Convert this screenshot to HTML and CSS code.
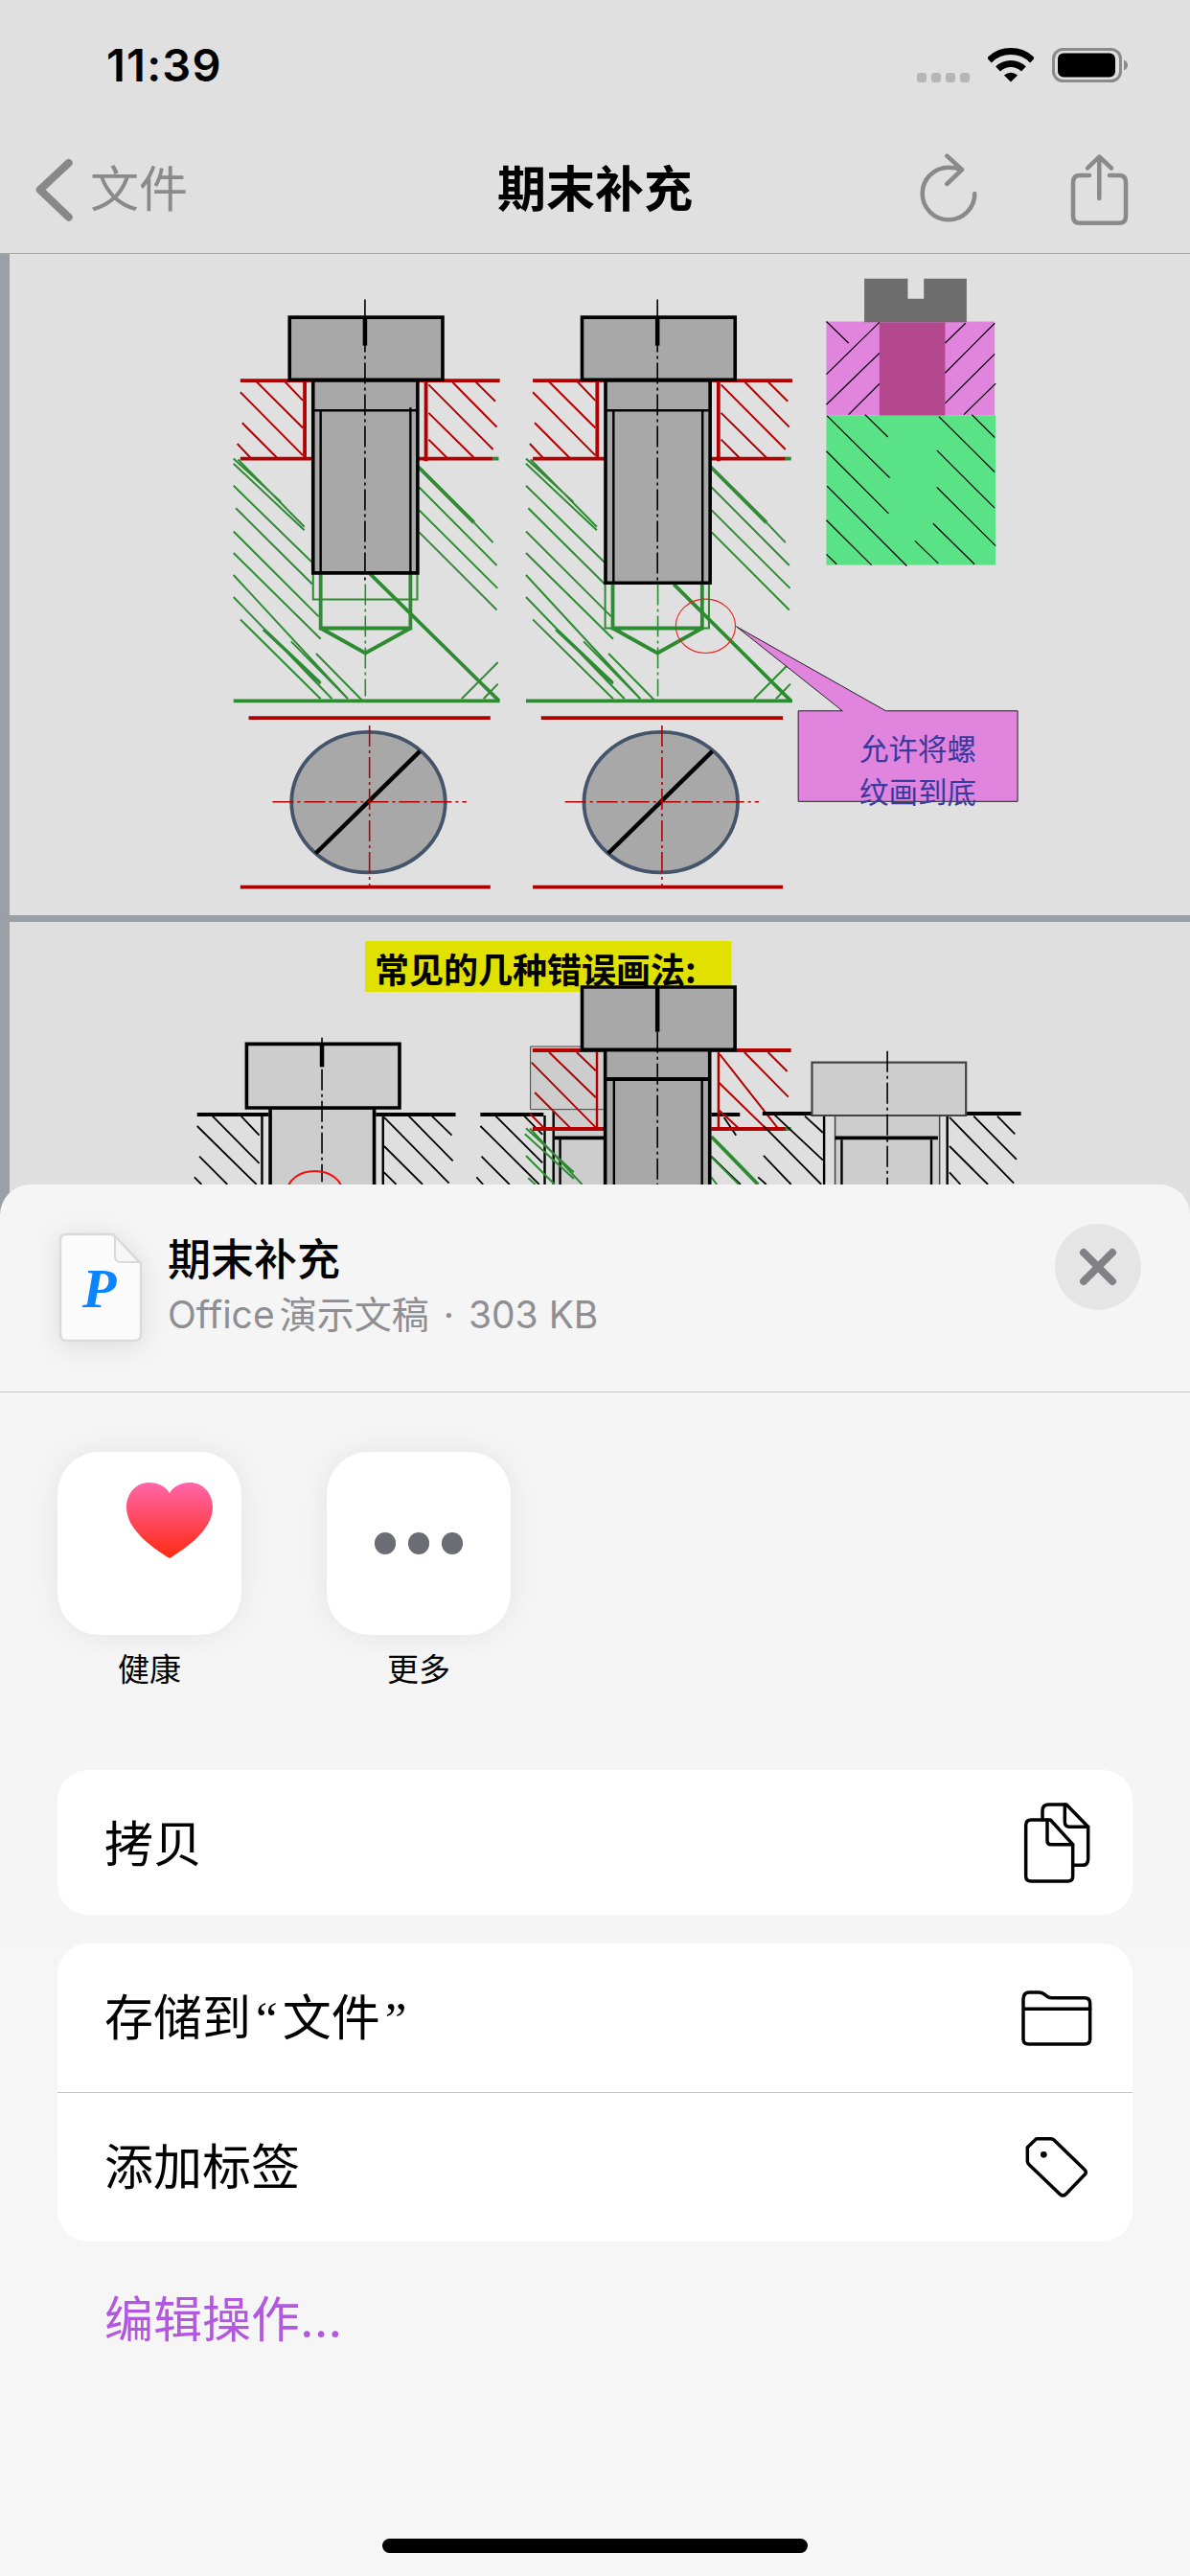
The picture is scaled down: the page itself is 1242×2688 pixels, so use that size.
FILE: index.html
```html
<!DOCTYPE html>
<html lang="zh-CN">
<head>
<meta charset="utf-8">
<title>期末补充</title>
<link rel="stylesheet" href="styles.css">
</head>
<body>
<div class="phone">
  <div class="status">
    <span class="time">11:39</span>
    <div class="status-icons">
      <div class="signal"><i></i><i></i><i></i><i></i></div>
      <svg class="wifi" width="48" height="37" viewBox="1031.5 48.5 48 37">
        <path class="wifi-arc" d="M1032.9 62.4A32 32 0 0 1 1078.1 62.4"/>
        <path class="wifi-arc" d="M1042.1 71.6A19 19 0 0 1 1068.9 71.6"/>
        <path class="wifi-dot" d="M1055.5 85L1048.4 77.9Q1055.5 72.6 1062.6 77.9Z"/>
      </svg>
      <svg class="battery" width="79" height="36" viewBox="1098 49.5 79 36">
        <rect class="bat-shell" x="1099.5" y="51" width="70" height="33" rx="10"/>
        <rect class="bat-fill" x="1104" y="55" width="60" height="25" rx="6"/>
        <path class="bat-nub" d="M1173 62Q1177 64 1177 67.5Q1177 71 1173 73Z"/>
      </svg>
    </div>
  </div>
  <div class="nav">
    <div class="nav-left">
      <svg class="chevron" width="44" height="70" viewBox="35 163 44 70"><path d="M71.7 170L41.7 198L71.7 226.7"/></svg>
      <span class="back-label">文件</span>
    </div>
    <div class="nav-title">期末补充</div>
    <div class="nav-right">
      <svg class="nav-icon" width="64" height="76" viewBox="958 158 64 76">
        <path d="M1017.3 200A27.3 27.3 0 1 1 990 172.7Q997 172.7 1003 175"/>
        <path d="M988.3 160.7L1004 175L988.3 190"/>
      </svg>
      <svg class="nav-icon" width="64" height="76" viewBox="1116 158 64 76">
        <path d="M1137 181H1127Q1120 181 1120 188V223.7Q1120 230.7 1127 230.7H1168Q1175 230.7 1175 223.7V188Q1175 181 1168 181H1158"/>
        <path d="M1147.3 205V162M1135 173.5L1147.3 161.5L1160 173.5"/>
      </svg>
    </div>
  </div>

  <div class="slide">
    <svg class="drawing" width="1232" height="690" viewBox="10 265 1232 690">
      <defs>
        <g id="frame">
          <path class="red thin" d="M120 272L243 384M195 272L243 318M78 298L243 450M83 372L175 456M70 422L105 456"/>
          <path class="red thin" d="M638 274L755 382M700 274L751 320M575 280L745 436M575 348L695 456M575 412L628 460"/>
          <path class="red thick" d="M78 270H763M78 458H270M548 458H745M248 270V458M568 270V464"/>
          <path class="green tip" d="M745 458H760"/>
          <path class="green thin" d="M60 458L185 562M60 470L247 630M72 460L247 622M60 523L268 708M66 577L268 760M60 633L285 838M60 685L290 892M60 738L362 1036M60 791L320 1036M78 845L290 1036M138 870L290 1000M144 870L290 996M212 898L362 1036M278 927L400 1040"/>
          <path class="green thin" d="M695 612L745 660M550 527L755 715M550 582L757 770M550 635L755 822M662 1036L758 948M720 1036L758 1000"/>
          <path class="green mid" d="M548 478L695 612"/>
          <path class="green thick" d="M60 1041H763"/>
          <rect class="steel line-bk" x="208" y="118" width="404" height="150"/>
          <path class="black slot" d="M407 118V186"/>
          <path class="dark-red thick" d="M100 1082H738M78 1489H738"/>
          <ellipse class="pin" cx="416" cy="1285" rx="203" ry="169"/>
          <path class="black slot" d="M277 1408L552 1162"/>
          <path class="red dash-thin" d="M163 1284H675M419 1100V1489"/>
        </g>
      </defs>

      <g transform="translate(220,280) scale(.3954,.4336)">
        <use href="#frame"/>
        <use href="#frame" transform="translate(772,0)"/>

        <!-- first bolt -->
        <path class="green thread" d="M270 735V797H545V735"/>
        <path class="green mid" d="M290 735V866H527V735M290 866L408 926L527 866"/>
        <path class="green mid" d="M420 735L760 1040"/>
        <rect class="steel line-bk" x="270" y="270" width="276" height="463"/>
        <path class="black line-md" d="M270 342H546M290 342V733M527 335V733"/>
        <path class="black dash" d="M407 75V760"/>
        <path class="green dash-thin" d="M408 760V1030"/>

        <!-- second bolt -->
        <path class="green thread" d="M1041 760V866H1315V760"/>
        <path class="green mid" d="M1061 760V866H1297V760M1061 866L1179 926L1297 866"/>
        <path class="green mid" d="M1222 760L1530 1040"/>
        <rect class="steel line-bk" x="1042" y="270" width="276" height="487"/>
        <path class="black line-md" d="M1042 342H1318M1063 342V757M1298 342V757"/>
        <path class="black dash" d="M1179 75V757"/>
        <path class="green dash-thin" d="M1180 760V1030"/>
      </g>

      <g transform="translate(540,280) scale(.3571,.4336)">
        <ellipse class="ring" cx="550" cy="861" rx="87" ry="65"/>
        <path class="callout" d="M640 862L1077 1065H1462V1283H821V1065H950Z"/>
        <rect class="pink" x="903" y="128" width="492" height="226"/>
        <rect class="green-fill" x="903" y="354" width="495" height="360"/>
        <rect class="magenta" x="1058" y="130" width="192" height="224"/>
        <path class="screw" d="M1014 25H1141V73H1188V25H1313V130H1014Z"/>
        <path class="hatch" d="M903 128L968 180M903 255L1058 130M903 328L1058 204M968 352L1058 278M1250 180L1310 132M1250 252L1395 132M1250 325L1395 206M1305 352L1398 277"/>
        <path class="hatch" d="M905 355L1088 504M1016 352L1083 406M903 440L1085 590M905 524L1138 716M903 606L1035 714M903 688L933 712M1232 357L1395 490M1328 352L1395 407M1226 438L1395 577M1226 527L1398 668M1215 614L1336 712M1162 656L1230 710"/>
      </g>
      <text class="callout-text" x="897" y="793">允许将螺</text>
      <text class="callout-text" x="897" y="838">纹画到底</text>
    </svg>
  </div>
  <div class="rule"></div>
  <div class="slide slide-b">
    <svg class="drawing" width="1232" height="274" viewBox="10 962 1232 274">
      <rect class="yellow" x="381" y="982" width="382.500" height="53"/>
      <text class="banner" x="391" y="1026">常见的几种错误画法:</text>
      <g transform="translate(200,1080) scale(.574,.3333)">
        <!-- bolt A -->
        <path class="black thin-h" d="M38 254L123 402M90 254L123 314M10 285L118 468M14 380L65 468M5 445L18 468M395 254L475 394M437 254L473 314M350 258L468 464M350 348L420 468M350 430L372 468"/>
        <path class="black rail" d="M10 249H140M335 249H480"/>
        <path class="black line-md" d="M128 252V470M348 252V470"/>
        <rect class="light line-bk" x="143" y="228" width="189" height="260"/>
        <rect class="light line-bk" x="100" y="28" width="278" height="200"/>
        <path class="black slot" d="M237 28V100"/>
        <path class="black dash" d="M237 8V460"/>
        <ellipse class="arc" cx="224" cy="490" rx="50" ry="64"/>

        <!-- bolt behind -->
        <path class="black thin-h" d="M553 254L638 400M605 254L638 312M525 285L632 468M527 380L578 468M518 445L530 468M968 258L990 314M945 380L998 468"/>
        <path class="black rail" d="M525 249H640M945 249H997"/>
        <path class="black line-md" d="M642 252V470"/>
        <rect class="light" x="658" y="233" width="92" height="250"/>
        <path class="black rail" d="M660 322H750"/>
        <path class="black line-md" d="M670 322V470M658 240V470"/>
        <rect class="light line-hair" x="616" y="36" width="134" height="197"/>

        <!-- red frame and green hatch -->
        <path class="green thin" d="M608 292L695 430M615 292L710 468M606 310L695 450M608 378L660 468M612 448L625 468"/>
        <path class="green thin" d="M945 382L995 468M945 445L955 468"/>
        <path class="green mid" d="M945 318L1030 468"/>
        <path class="red thin" d="M650 54L735 196M700 54L735 112M618 86L735 290M624 180L688 290M615 246L640 290M1005 54L1085 194M1048 54L1083 114M960 60L1065 290M958 148L1045 294M958 234L996 294"/>
        <path class="red rail-r" d="M620 48H1090M620 294H750M945 294H1080"/>
        <path class="green tip" d="M1080 294H1090"/>
        <path class="red line-md" d="M737 48V296M958 48V300"/>

        <!-- bolt B -->
        <rect class="steel line-bk" x="752" y="46" width="190" height="440"/>
        <rect class="steel line-bk" x="710" y="-150" width="278" height="196"/>
        <path class="black rail" d="M752 138H942"/>
        <path class="black line-md" d="M768 144V470M928 144V470"/>
        <path class="black slot" d="M847 -150V-10"/>
        <path class="black dash" d="M847 -10V470"/>

        <!-- bolt C -->
        <path class="black thin-h" d="M1060 250L1148 392M1115 254L1148 306M1040 285L1145 468M1040 378L1090 468M1030 445L1045 468M1378 258L1495 464M1422 254L1500 390M1465 254L1497 310M1378 348L1448 468M1378 430L1398 468"/>
        <path class="black rail" d="M1038 246H1128M1408 246H1508"/>
        <path class="black line-md" d="M1150 252V470M1374 252V470"/>
        <rect class="light" x="1170" y="252" width="190" height="236"/>
        <path class="dim-line" d="M1170 252V470M1360 252V470"/>
        <path class="black rail" d="M1170 322H1357"/>
        <path class="black line-md" d="M1182 328V470M1345 328V470"/>
        <rect class="light line-dk" x="1128" y="86" width="280" height="166"/>
        <path class="black dash" d="M1265 50V470"/>
      </g>
    </svg>
  </div>

  <section class="sheet">
    <header class="sheet-head">
      <svg class="file-icon" width="90" height="118" viewBox="60 1285 90 118">
        <path class="file-page" d="M69 1288H118L147 1318V1392Q147 1399 140 1399H69Q63 1399 63 1392V1294Q63 1288 69 1288Z"/>
        <path class="file-fold" d="M120 1290V1311Q120 1317 126 1317H145Z"/>
        <text class="file-letter" x="86" y="1364">P</text>
      </svg>
      <div class="file-meta">
        <div class="file-name">期末补充</div>
        <div class="file-sub"><span class="file-kind">Office</span>演示文稿<span class="sep">·</span>303 KB</div>
      </div>
      <button class="close" type="button" aria-label="关闭">
        <svg width="40" height="40" viewBox="0 0 40 40"><path d="M5 5L35 35M35 5L5 35"/></svg>
      </button>
    </header>

    <div class="apps">
      <div class="app">
        <div class="app-tile tile-heart">
          <svg width="90" height="79" viewBox="0 0 90 79">
            <defs>
              <linearGradient id="heart" x1="0" y1="0" x2="0" y2="1">
                <stop offset="0" stop-color="#ff66aa"/>
                <stop offset="1" stop-color="#ff2a10"/>
              </linearGradient>
            </defs>
            <path fill="url(#heart)" d="M45 79C30 70 0 50 0 26C0 10 11 0 24 0C33 0 41 4 45 11C49 4 57 0 66 0C79 0 90 10 90 26C90 50 60 70 45 79Z"/>
          </svg>
        </div>
        <div class="app-label">健康</div>
      </div>
      <div class="app">
        <div class="app-tile tile-more"><i></i><i></i><i></i></div>
        <div class="app-label">更多</div>
      </div>
    </div>

    <div class="card card-one">
      <div class="row row-short">
        <span class="row-text">拷贝</span>
        <svg class="row-icon" width="80" height="90" viewBox="490 180 240 270">
          <path d="M530 243H590L660 320V420Q660 435 645 435H530Q513 435 513 420V260Q513 243 530 243Z"/>
          <path d="M580 243V308Q580 320 592 320H660"/>
          <path d="M565 243V215Q565 195 585 195H640L708 265V365Q708 385 690 385H660"/>
          <path d="M635 195V250Q635 265 650 265H708"/>
        </svg>
      </div>
    </div>
    <div class="card">
      <div class="row">
        <span class="row-text">存储到<span class="quote">“</span>文件<span class="quote">”</span></span>
        <svg class="row-icon" width="80" height="66" viewBox="488 760 240 198">
          <path d="M503 800Q503 778 522 778H552Q564 778 574 788Q582 795 592 795H695Q712 795 712 812V925Q712 940 695 940H520Q503 940 503 925Z"/>
          <path d="M505 830H712"/>
        </svg>
      </div>
      <div class="row row-sep">
        <span class="row-text">添加标签</span>
        <svg class="row-icon" width="80" height="70" viewBox="489 1224 240 210">
          <path d="M517 1265L545 1238H590Q596 1238 600 1242L696 1335Q704 1343 696 1351L637 1412Q628 1420 619 1412L523 1320Q517 1314 517 1308Z"/>
          <circle class="tag-hole" cx="568" cy="1288" r="10"/>
        </svg>
      </div>
    </div>
    <div class="edit">编辑操作...</div>
    <div class="home-bar"></div>
  </section>
</div>
</body>
</html>
```

FILE: styles.css
```css
html, body {
  margin: 0;
  padding: 0;
}

body {
  font-family: Inter, "Noto Sans CJK SC", sans-serif;
  color: #000;
}

.phone {
  position: relative;
  width: 1242px;
  height: 2688px;
  overflow: hidden;
  background: #e0e0e0;
  display: flex;
  flex-direction: column;
}

/* status bar */
.status {
  height: 132px;
  box-sizing: border-box;
  flex: none;
  display: flex;
  justify-content: space-between;
  align-items: flex-end;
  padding: 0 65px 46px 111px;
}

.time {
  font-size: 47px;
  line-height: 47px;
  font-weight: 600;
  letter-spacing: 1.2px;
  margin-bottom: -5px;
}

.status-icons {
  display: flex;
  align-items: flex-end;
  gap: 19px;
}

.signal {
  display: flex;
  gap: 5px;
}

.signal i {
  width: 10px;
  height: 10px;
  border-radius: 3px;
  background: #b5b5b5;
}

.wifi-arc {
  fill: none;
  stroke: #000;
  stroke-width: 7;
}

.wifi-dot {
  fill: #000;
}

.bat-shell {
  fill: none;
  stroke: #8a8a8a;
  stroke-width: 3;
}

.bat-fill {
  fill: #000;
}

.bat-nub {
  fill: #8a8a8a;
}

/* nav bar */
.nav {
  height: 133px;
  box-sizing: border-box;
  flex: none;
  display: grid;
  grid-template-columns: 1fr auto 1fr;
  align-items: center;
  border-bottom: 1px solid #a6a6a6;
  padding: 0 35px;
}

.nav-left {
  display: flex;
  align-items: center;
  gap: 15px;
}

.chevron path {
  fill: none;
  stroke: #888;
  stroke-width: 8;
  stroke-linecap: round;
  stroke-linejoin: round;
}

.back-label {
  font-size: 51px;
  line-height: 60px;
  color: #8a8a8a;
}

.nav-title {
  font-size: 51px;
  line-height: 60px;
  font-weight: 700;
}

.nav-right {
  display: flex;
  justify-content: flex-end;
  gap: 94px;
  margin-right: 27px;
}

.nav-icon path {
  fill: none;
  stroke: #8a8a8a;
  stroke-width: 4.5;
  stroke-linecap: round;
  stroke-linejoin: round;
}

/* document */
.slide {
  flex: none;
  height: 690px;
  border-left: 10px solid #9aa0a8;
  display: flex;
}

.slide-b {
  flex: 1;
  background: #dfdfdf;
}

.rule {
  flex: none;
  height: 7px;
  background: #9a9fa7;
}

.drawing {
  display: block;
  flex: none;
}

.drawing * {
  vector-effect: non-scaling-stroke;
}

.drawing path,
.drawing ellipse {
  fill: none;
}

.red { stroke: #b30000; }
.dark-red { stroke: #ad0000; }
.green { stroke: #2e8b32; }
.black { stroke: #000; }

.thin { stroke-width: 2; }
.thick { stroke-width: 3.8; }
.tip { stroke-width: 3.8; }
.mid { stroke-width: 3.8; }
.thread { stroke-width: 2; }
.line-md { stroke-width: 2.4; }
.thin-h { stroke-width: 1.8; }
.rail { stroke-width: 3.8; }
.rail-r { stroke-width: 4; }
.slot { stroke-width: 4.5; }
.dash { stroke-width: 1.6; stroke-dasharray: 22 4 3 4; }
.dash-thin { stroke-width: 1.6; stroke-dasharray: 22 4 3 4; }
.dim-line { stroke: #444; stroke-width: 1.5; }

.steel { fill: #a8a8a8; }
.light { fill: #cdcdcd; }
.line-bk { stroke: #000; stroke-width: 3.6; }
.line-dk { stroke: #444; stroke-width: 2.2; }
.line-hair { stroke: #444; stroke-width: 1; }

.drawing .pin {
  fill: #a8a8a8;
  stroke: #44546a;
  stroke-width: 3.8;
}

.drawing .ring {
  stroke: #f01c1c;
  stroke-width: 1.1;
}

.drawing .arc {
  stroke: #f01010;
  stroke-width: 2;
}

.drawing .callout {
  fill: #e084dd;
  stroke: #222;
  stroke-width: 1;
}

.pink { fill: #e084dd; }
.green-fill { fill: #5ae286; }
.magenta { fill: #b4488f; }

.drawing .screw {
  fill: #6d6d6d;
}

.hatch {
  stroke: #000;
  stroke-width: 1.2;
}

.callout-text {
  font-family: "Noto Sans CJK SC", sans-serif;
  font-size: 30.5px;
  fill: #39399e;
}

.yellow { fill: #e1e100; }

.banner {
  font-family: "Noto Sans CJK SC", sans-serif;
  font-size: 36px;
  font-weight: 700;
  fill: #000;
}

/* share sheet */
.sheet {
  position: absolute;
  left: 0;
  right: 0;
  top: 1236px;
  bottom: 0;
  border-radius: 32px 32px 0 0;
  background: linear-gradient(#f4f5f4, #f5f5f5 40%, #f6f6f6);
}

.sheet-head {
  height: 217px;
  box-sizing: border-box;
  border-bottom: 1px solid #c6c6c8;
  display: flex;
  align-items: flex-start;
  padding: 49px 51px 0 60px;
}

.file-icon {
  flex: none;
  filter: drop-shadow(0 4px 14px rgba(0, 0, 0, .1));
}

.file-page {
  fill: #fbfbfb;
  stroke: #dadada;
  stroke-width: 2.5;
}

.file-fold {
  fill: #f6f6f6;
  stroke: #dadada;
  stroke-width: 2;
}

.file-letter {
  font-family: "Liberation Serif", serif;
  font-style: italic;
  font-weight: 700;
  font-size: 58px;
  fill: #0a84ff;
}

.file-meta {
  flex: 1;
  padding-left: 25px;
}

.file-name {
  font-size: 45px;
  line-height: 60px;
  font-weight: 500;
}

.file-sub {
  font-size: 39px;
  line-height: 54px;
  color: #8e8e93;
}

.file-kind {
  margin-right: 5px;
}

.sep {
  margin: 0 15px;
}

.close {
  flex: none;
  width: 90px;
  height: 90px;
  padding: 0;
  margin-top: -8px;
  border: 0;
  border-radius: 50%;
  background: #e5e5e6;
  display: flex;
  align-items: center;
  justify-content: center;
}

.close path {
  fill: none;
  stroke: #818186;
  stroke-width: 8;
  stroke-linecap: round;
}

.apps {
  display: flex;
  gap: 89px;
  padding: 62px 0 0 60px;
}

.app {
  width: 192px;
}

.app-tile {
  width: 192px;
  height: 191px;
  box-sizing: border-box;
  border-radius: 44px;
  background: #fff;
  box-shadow: 0 0 36px rgba(0, 0, 0, .07);
}

.tile-heart {
  padding: 32px 0 0 72px;
}

.tile-heart svg {
  display: block;
}

.tile-more {
  display: flex;
  align-items: center;
  justify-content: center;
  gap: 12.5px;
}

.tile-more i {
  width: 22.5px;
  height: 22.5px;
  border-radius: 50%;
  background: #6c6c74;
}

.app-label {
  margin-top: 16px;
  margin-bottom: -1px;
  font-size: 33px;
  line-height: 40px;
  text-align: center;
}

.card {
  margin: 30px 60px 0;
  border-radius: 32px;
  background: #fff;
}

.card-one {
  margin-top: 86px;
}

.row {
  height: 155px;
  display: flex;
  align-items: center;
  justify-content: space-between;
  padding: 0 39px 0 49px;
  font-size: 51px;
}

.row-text {
  margin-bottom: 8px;
}

.row-short {
  height: 151px;
}

.row-short .row-text {
  margin-bottom: 3px;
}

.quote {
  font-family: "Liberation Serif", serif;
  margin: 0 5px;
}

.row-sep {
  border-top: 1px solid #c6c6c8;
}

.row-icon {
  flex: none;
}

.row-icon path {
  fill: none;
  stroke: #000;
  stroke-width: 10.5;
  stroke-linejoin: round;
  stroke-linecap: round;
}

.tag-hole {
  fill: #000;
}

.edit {
  margin: 52px 0 0 109px;
  font-size: 51px;
  line-height: 60px;
  color: #b258de;
}

.home-bar {
  position: absolute;
  left: 399px;
  bottom: 24px;
  width: 444px;
  height: 15px;
  border-radius: 8px;
  background: #000;
}
```
